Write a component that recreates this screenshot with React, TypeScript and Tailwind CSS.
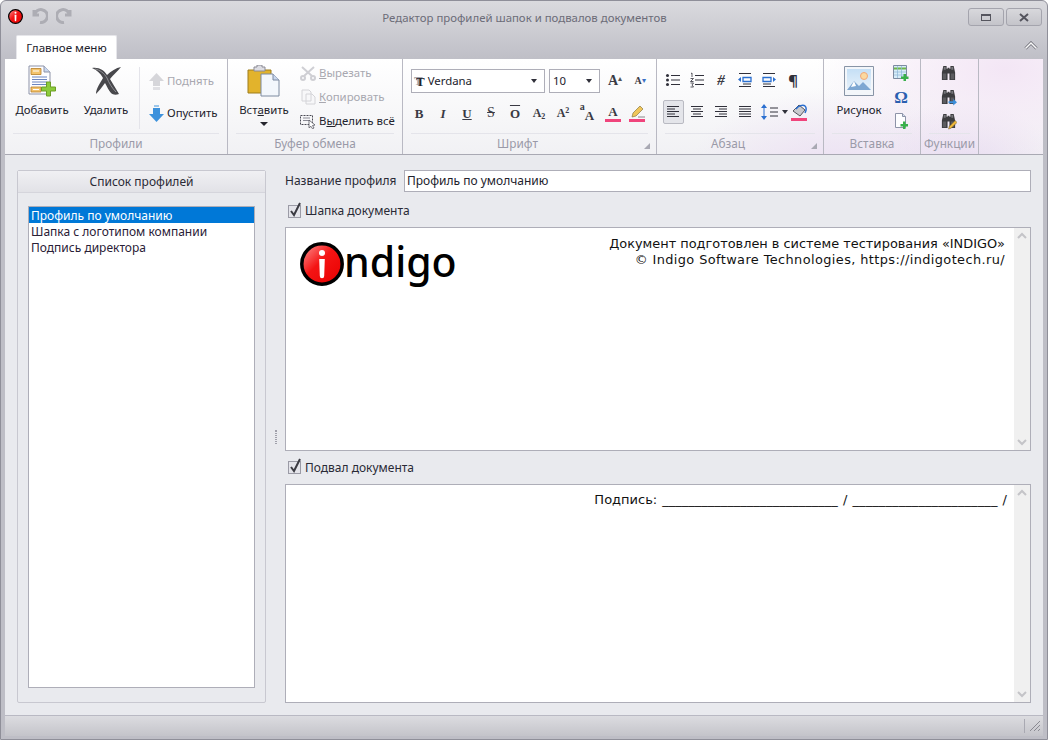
import React from "react";

const UI = "font-['Noto_Sans',sans-serif]";

function Grp({ w, label, launcher, children }: { w: string; label: string; launcher?: boolean; children: React.ReactNode }) {
  return (
    <div className={`${w} shrink-0 flex flex-col border-r border-[#b9b9c3]`}>
      <div className="h-[74px] flex">{children}</div>
      <div className={`relative mx-[8px] h-[21px] border-t border-[#e4e4ea] flex items-center justify-center text-[11.8px] leading-none text-[#9a9aa8] ${launcher ? "pr-[24px]" : ""}`}>
        {label}
        {launcher && <span className="absolute right-[-2px] bottom-[5px] w-0 h-0 border-l-[6px] border-l-transparent border-b-[6px] border-b-[#a9a9b3]" />}
      </div>
    </div>
  );
}

function Big({ w, icon, children, caret }: { w: string; icon: React.ReactNode; children: React.ReactNode; caret?: boolean }) {
  return (
    <div className={`${w} shrink-0 flex flex-col items-center pt-[6px]`}>
      <div className="h-[32px] flex items-center justify-center">{icon}</div>
      <div className="mt-[5px] text-[11.4px] leading-[16px] text-[#22222c]">{children}</div>
      {caret && <span className="mt-[4px] w-0 h-0 border-x-[4px] border-x-transparent border-t-[4px] border-t-[#26262e]" />}
    </div>
  );
}

function Small({ icon, text, off, h }: { icon: React.ReactNode; text: React.ReactNode; off?: boolean; h: string }) {
  return (
    <div className={`${h} flex items-center gap-[3px] text-[11.4px] leading-none ${off ? "text-[#a8a8b0]" : "text-[#22222c]"}`}>
      <span className="w-[16px] h-[16px] flex items-center justify-center">{icon}</span>
      <span>{text}</span>
    </div>
  );
}

function Tool({ children, active }: { children: React.ReactNode; active?: boolean }) {
  return (
    <div className="w-[24px] h-[24px] flex items-center justify-center">
      <div className={`w-[21px] h-[24px] flex items-center justify-center ${active ? "border border-[#b9bac2] rounded-[2px] bg-[#e4e5ea]" : ""}`}>
        {children}
      </div>
    </div>
  );
}

function Lines({ rows }: { rows: [number, number][] }) {
  return (
    <svg width="16" height="16" viewBox="0 0 16 16" fill="none" stroke="#30303a" strokeWidth="1">
      {rows.map(([a, b], i) => (
        <path key={i} d={`M${a} ${2.5 + i * 2.5}H${b}`} />
      ))}
    </svg>
  );
}

function Glyph({ children, cls }: { children: React.ReactNode; cls: string }) {
  return <span className={`font-['Liberation_Serif',serif] leading-none text-[#3a3a44] ${cls}`}>{children}</span>;
}

function Bar({ children, cls }: { children: React.ReactNode; cls?: string }) {
  return (
    <span className="relative flex flex-col items-center">
      <span className={cls}>{children}</span>
      <span className="mt-[1px] w-[16px] h-[3px] bg-[#f0447c]" />
    </span>
  );
}

function Binoculars({ badge }: { badge?: "arrow" | "pen" }) {
  return (
    <svg width="17" height="17" viewBox="0 0 18 18">
      <path d="M3.500 1h3.500v3h1v-1h2v1h1V1h3.500l1.500 7v8h-6V9H8v7H2V8z" fill="#3d3d40" />
      <path d="M3 9h3.500v6H3zM11.500 9H15v6h-3.500z" fill="#5b5b5f" />
      <path d="M4 2h2v3H4zM12 2h2v3h-2z" fill="#77777c" />
      {badge === "arrow" && <path d="M9 13h5v-2.500l4 3.500-4 3.500V15H9z" fill="#3c8fdc" />}
      {badge === "pen" && <path d="M9 17l1-3 6-6 2 2-6 6z" fill="#f0b93a" stroke="#5a4a20" strokeWidth=".5" />}
    </svg>
  );
}

function Check({ label }: { label: string }) {
  return (
    <div className="flex items-center h-[16px] pl-[3px] gap-[4px] text-[12px] leading-none text-[#2a2a36]">
      <span className="relative w-[13px] h-[13px] border border-[#9b9ba6] bg-[#e4e4ea]">
        <svg className="absolute left-[-1px] top-[-4px]" width="16" height="16" viewBox="0 0 16 16" fill="none">
          <path d="M3 9l3 4 6-12" stroke="#3b3b42" strokeWidth="2" />
        </svg>
      </span>
      {label}
    </div>
  );
}

function Editor({ h, children }: { h: string; children: React.ReactNode }) {
  return (
    <div className={`${h} flex border border-[#aeaeb8] bg-white`}>
      <div className="flex-1 min-w-0 relative">{children}</div>
      <div className="w-[16px] bg-[#f0f0f0] flex flex-col items-center justify-between py-[4px]">
        <svg width="10" height="8" viewBox="0 0 10 8" fill="none" stroke="#c4c4c8" strokeWidth="2"><path d="M1 6l4-4 4 4" /></svg>
        <svg width="10" height="8" viewBox="0 0 10 8" fill="none" stroke="#c4c4c8" strokeWidth="2"><path d="M1 2l4 4 4-4" /></svg>
      </div>
    </div>
  );
}

function InfoIcon({ size }: { size: number }) {
  return (
    <svg width={size} height={size} viewBox="0 0 44 44" className="shrink-0">
      <defs>
        <linearGradient id={`red${size}`} x1="0" y1="0" x2="1" y2="1">
          <stop offset="0" stopColor="#ff9a9a" />
          <stop offset=".45" stopColor="#f41414" />
          <stop offset="1" stopColor="#e80000" />
        </linearGradient>
      </defs>
      <circle cx="22" cy="22" r="20.200" fill={`url(#red${size})`} stroke="#000" strokeWidth="3.500" />
      <circle cx="22" cy="11" r="3" fill="#fff" />
      <path d="M19.200 17h5.600l-.6 17a2.200 2.200 0 0 1-4.400 0z" fill="#fff" />
    </svg>
  );
}

export default function App() {
  return (
    <div className={`${UI} w-[1048px] h-[740px] overflow-hidden flex flex-col rounded-t-[6px] border border-[#8f8f99] bg-[linear-gradient(#dadade,#bebec6_60px)] px-[4px] pb-[3px]`}>
      {/* title bar */}
      <div className="h-[34px] shrink-0 flex items-start">
        <div className="flex items-center gap-[8px] pl-[3px] pt-[7px]">
          <InfoIcon size={15} />
          <svg width="17" height="16" viewBox="0 0 17 16" fill="none" stroke="#adadb4" strokeWidth="3"><path d="M3 2v5h5M3.500 7A6.500 6.500 0 1 1 9 14.500" /></svg>
          <svg width="17" height="16" viewBox="0 0 17 16" fill="none" stroke="#adadb4" strokeWidth="3"><path d="M14 2v5H9M13.500 7A6.500 6.500 0 1 0 8 14.500" /></svg>
        </div>
        <div className="flex-1 text-center pt-[9px] pl-[8px] text-[11.4px] leading-[16px] text-[#6c6c78]">Редактор профилей шапок и подвалов документов</div>
        <div className="flex gap-[2px] pt-[7px] pr-[1px]">
          <div className="w-[36px] h-[18px] rounded-[3px] border border-[#a4a4ad] bg-[linear-gradient(#d8d8dc,#c4c4ca)] flex items-center justify-center">
            <span className="w-[10px] h-[7px] border border-[#55555e] border-t-[2px]" />
          </div>
          <div className="w-[36px] h-[18px] rounded-[3px] border border-[#a4a4ad] bg-[linear-gradient(#d8d8dc,#c4c4ca)] flex items-center justify-center">
            <svg width="10" height="9" viewBox="0 0 10 9" stroke="#55555e" strokeWidth="2"><path d="M1 1l8 7M9 1L1 8" /></svg>
          </div>
        </div>
      </div>

      {/* tabs */}
      <div className="h-[24px] shrink-0 flex items-end justify-between pl-[11px] pr-[5px]">
        <div className="w-[101px] h-[24px] bg-white border-t border-x border-[#e6e6ea] rounded-t-[2px] flex items-center justify-center text-[11.6px] text-[#22222c]">Главное меню</div>
        <svg className="mb-[9px]" width="14" height="9" viewBox="0 0 14 9" fill="none">
          <path d="M1.500 7.500L7 2l5.500 5.500" stroke="#6b6b74" strokeWidth="3" />
          <path d="M1.500 7.500L7 2l5.500 5.500" stroke="#fafafa" strokeWidth="1.500" />
        </svg>
      </div>

      {/* ribbon */}
      <div className="h-[96px] shrink-0 flex border-b border-[#a9a9b3] bg-[radial-gradient(ellipse_150px_90px_at_830px_120px,#ecdff3,transparent),radial-gradient(ellipse_190px_110px_at_1000px_10px,#f3e6f5,transparent),radial-gradient(ellipse_90px_70px_at_960px_110px,#e6daf0,transparent),linear-gradient(#ffffff,#f1f1f4)]">
        <Grp w="w-[223px]" label="Профили">
          <Big w="w-[74px]" icon={
            <svg width="30" height="32" viewBox="0 0 30 32">
              <path d="M2 1h15l6 6v22H2z" fill="#fdfdff" stroke="#8d93a8" />
              <path d="M17 1v6h6" fill="#c9d7ee" stroke="#8d93a8" />
              <path d="M4 3.500h10v6H4zM4 22h10v5H4z" fill="#f3c36d" stroke="#b67f28" strokeWidth=".8" />
              <path d="M6 6h6M6 24.500h6" stroke="#fff" />
              <path d="M5 12h15M5 14.500h15M5 17h15M5 19.500h15" stroke="#6d86c0" />
              <path d="M19.500 17h4v5h5v4h-5v5h-4v-5h-5v-4h5z" fill="#8ccb3c" stroke="#6c9e25" />
            </svg>
          }>Добавить</Big>
          <Big w="w-[54px]" icon={
            <svg width="31" height="30" viewBox="0 0 31 30">
              <path d="M1 2c7-1 12 2 15 7 4-4 9-7 14-8-3 4-8 8-11 12 3 5 6 10 9 15-3 1-6 1-8-1-3-3-4-7-6-10-3 4-6 8-9 11 0-5 4-11 7-16C9 7 6 4 1 2z" fill="#48484c" />
              <path d="M4 3c5 1 9 4 12 9 2 5 5 10 9 14" stroke="#8f8f94" fill="none" />
            </svg>
          }>Удалить</Big>
          <div className="w-px h-[62px] mt-[8px] ml-[6px] mr-[8px] bg-[#e4e4ea]" />
          <div className="pt-[6px]">
            <Small h="h-[32px]" off text="Поднять" icon={
              <svg width="15" height="17" viewBox="0 0 15 17"><path d="M7.500 0L15 8h-4v5H4V8H0z" fill="#d6d6da" /><path d="M4 14h7v3H4z" fill="#e0e0e4" /></svg>
            } />
            <Small h="h-[32px]" text="Опустить" icon={
              <svg width="15" height="17" viewBox="0 0 15 17"><path d="M5 0h5v2H5z" fill="#9cc6ea" /><path d="M4 3h7v6h4l-7.500 8L0 9h4z" fill="#3e92dc" /></svg>
            } />
          </div>
        </Grp>

        <Grp w="w-[175px]" label="Буфер обмена">
          <Big w="w-[72px]" caret icon={
            <svg width="34" height="32" viewBox="0 0 34 32">
              <path d="M1 5h23v23H1z" fill="#e2b32c" stroke="#9d7c1c" />
              <path d="M7 2h3V0h5v2h3v4H7z" fill="#dcdce2" stroke="#8a8a94" />
              <path d="M14 9h12l6 6v16H14z" fill="#f3f7fc" stroke="#7d8aa0" />
              <path d="M26 9v6h6" fill="#c9d7ee" stroke="#7d8aa0" />
            </svg>
          }>Вст<u>а</u>вить</Big>
          <div className="pt-[2px]">
            <Small h="h-[24px]" off text={<><u>В</u>ырезать</>} icon={
              <svg width="16" height="15" viewBox="0 0 16 15" fill="none" stroke="#cfcfd4" strokeWidth="2"><path d="M2 1l10 9M14 1L4 10" /><circle cx="3" cy="12" r="2" /><circle cx="13" cy="12" r="2" /></svg>
            } />
            <Small h="h-[24px]" off text={<><u>К</u>опировать</>} icon={
              <svg width="15" height="16" viewBox="0 0 15 16" fill="#f7f7f9" stroke="#d4d4d8"><path d="M1 1h7l2 2v9H1zM5 5h6l3 3v7H5z" /></svg>
            } />
            <Small h="h-[24px]" text={<>В<u>ы</u>делить всё</>} icon={
              <svg width="16" height="15" viewBox="0 0 16 15" fill="none"><path d="M.5 1.500h12v9H.5z" stroke="#4a4a55" strokeDasharray="2 1" /><path d="M3 4h7M3 6.500h7" stroke="#8b8b95" /><path d="M9 6l6 5-2.500.5L14 14l-1.500.8-1.500-2.500-2 1.500z" fill="#fff" stroke="#555560" strokeWidth=".8" /></svg>
            } />
          </div>
        </Grp>

        <Grp w="w-[254px]" label="Шрифт" launcher>
          <div className="pl-[8px] pt-[10px]">
            <div className="flex items-center h-[24px]">
              <div className="w-[134px] h-[24px] bg-white border border-[#aeaeb8] flex items-center pl-[4px] pr-[7px] text-[11.4px] text-[#22222c]">
                <span className="font-['Liberation_Serif',serif] font-bold text-[13px] leading-none mr-[3px] [text-shadow:-2px_-1px_0_#a0a0a8]">T</span>
                <span className="flex-1">Verdana</span>
                <span className="w-0 h-0 border-x-[3.500px] border-x-transparent border-t-[4px] border-t-[#30303a]" />
              </div>
              <div className="w-[51px] h-[24px] ml-[4px] bg-white border border-[#aeaeb8] flex items-center pl-[3px] pr-[7px] text-[11.4px] text-[#22222c]">
                <span className="flex-1">10</span>
                <span className="w-0 h-0 border-x-[3.500px] border-x-transparent border-t-[4px] border-t-[#30303a]" />
              </div>
              <div className="ml-[2px] w-[26px] flex justify-center items-start"><Glyph cls="text-[14px] font-bold">A</Glyph><span className="text-[8px] leading-none text-[#555]">▴</span></div>
              <div className="w-[24px] flex justify-center items-start"><Glyph cls="text-[10px] font-bold">A</Glyph><span className="text-[8px] leading-none text-[#3a6fc4]">▾</span></div>
            </div>
            <div className="flex items-center h-[24px] mt-[8px] -ml-[4px]">
              <Tool><Glyph cls="text-[13px] font-bold">B</Glyph></Tool>
              <Tool><Glyph cls="text-[13px] font-bold italic">I</Glyph></Tool>
              <Tool><Glyph cls="text-[13px] font-bold underline">U</Glyph></Tool>
              <Tool><Glyph cls="text-[14px] line-through">S</Glyph></Tool>
              <Tool><Glyph cls="text-[13px] font-bold overline">O</Glyph></Tool>
              <Tool><Glyph cls="text-[12px] font-bold">A<sub className="text-[8px]">2</sub></Glyph></Tool>
              <Tool><Glyph cls="text-[12px] font-bold">A<sup className="text-[8px]">2</sup></Glyph></Tool>
              <Tool><Glyph cls="relative text-[13px] font-bold pl-[5px] pt-[4px]"><span className="absolute left-0 top-[-3px] text-[10px]">a</span>A</Glyph></Tool>
              <div className="w-[28px] flex justify-center"><Bar><Glyph cls="text-[13px] font-bold block">A</Glyph></Bar></div>
              <div className="w-[20px] flex justify-center">
                <Bar>
                  <svg className="block" width="16" height="13" viewBox="0 0 16 13"><path d="M3 12l1-4 7-7 3 3-7 7z" fill="#f0c65a" stroke="#8a7a40" strokeWidth=".7" /><path d="M9 12h7" stroke="#888" /></svg>
                </Bar>
              </div>
            </div>
          </div>
        </Grp>

        <Grp w="w-[167px]" label="Абзац" launcher>
          <div className="pl-[4px] pt-[9px]">
            <div className="flex items-center h-[24px]">
              <Tool>
                <svg width="16" height="16" viewBox="0 0 16 16"><path d="M6 3.500h9M6 8h9M6 12.500h9" stroke="#30303a" /><circle cx="2.500" cy="3.500" r="1.500" fill="#30303a" /><circle cx="2.500" cy="8" r="1.500" fill="#30303a" /><circle cx="2.500" cy="12.500" r="1.500" fill="#30303a" /></svg>
              </Tool>
              <Tool>
                <svg width="16" height="16" viewBox="0 0 16 16"><path d="M6 3.500h9M6 8h9M6 12.500h9" stroke="#30303a" /><path d="M2 1.500l1-.5v4M1.500 6.500h3l-3 3h3M1.500 11h3l-1.500 2 1.500 2h-3" fill="none" stroke="#30303a" strokeWidth=".8" /></svg>
              </Tool>
              <Tool><Glyph cls="text-[15px] italic font-bold">#</Glyph></Tool>
              <Tool>
                <svg width="16" height="16" viewBox="0 0 16 16" fill="none"><path d="M2 1.500h12M2 14.500h12" stroke="#30303a" /><path d="M6 5.500h8v4H6z" stroke="#2a6fd0" strokeWidth="1.300" /><path d="M4 5l-3 2.500L4 10z" fill="#2a6fd0" /><path d="M6 12h8" stroke="#30303a" /></svg>
              </Tool>
              <Tool>
                <svg width="16" height="16" viewBox="0 0 16 16" fill="none"><path d="M2 1.500h12M2 14.500h12" stroke="#30303a" /><path d="M2 5.500h8v4H2z" stroke="#2a6fd0" strokeWidth="1.300" /><path d="M12 5l3 2.500L12 10z" fill="#2a6fd0" /><path d="M2 12h8" stroke="#30303a" /></svg>
              </Tool>
              <Tool><span className="text-[15px] leading-none font-bold text-[#30303a]">¶</span></Tool>
            </div>
            <div className="flex items-center h-[24px] mt-[8px]">
              <Tool active><Lines rows={[[2, 14], [2, 10], [2, 14], [2, 10], [2, 14]]} /></Tool>
              <Tool><Lines rows={[[2, 14], [4, 12], [2, 14], [4, 12], [2, 14]]} /></Tool>
              <Tool><Lines rows={[[2, 14], [6, 14], [2, 14], [6, 14], [2, 14]]} /></Tool>
              <Tool><Lines rows={[[2, 14], [2, 14], [2, 14], [2, 14], [2, 14]]} /></Tool>
              <div className="w-[34px] flex items-center justify-center gap-[2px]">
                <svg width="20" height="18" viewBox="0 0 20 18" fill="none"><path d="M4 1L1 5h6zM4 17l-3-4h6z" fill="#2a6fd0" /><path d="M4 5v8" stroke="#2a6fd0" /><path d="M10 5h8M10 9h8M10 13h8" stroke="#30303a" /></svg>
                <span className="w-0 h-0 border-x-[3.500px] border-x-transparent border-t-[4px] border-t-[#30303a]" />
              </div>
              <div className="w-[16px] flex justify-center">
                <Bar>
                  <svg className="block" width="16" height="13" viewBox="0 0 16 13"><path d="M2 7l6-6 6 5-5 6z" fill="#c9c9ce" stroke="#55555e" /><path d="M5 5c2-3 7-5 9-3s1 5 0 7" fill="none" stroke="#2a6fd0" strokeWidth="1.500" /></svg>
                </Bar>
              </div>
            </div>
          </div>
        </Grp>

        <Grp w="w-[97px]" label="Вставка">
          <Big w="w-[70px]" icon={
            <svg width="30" height="30" viewBox="0 0 30 30">
              <defs><linearGradient id="sky" x1="0" y1="0" x2="0" y2="1"><stop offset="0" stopColor="#c5dff5" /><stop offset="1" stopColor="#e8f2fb" /></linearGradient></defs>
              <path d="M.5.500h29v29H.5z" fill="#f3f6fa" stroke="#8894a6" />
              <path d="M3 3h24v21H3z" fill="url(#sky)" />
              <circle cx="20" cy="10" r="3.500" fill="#fbd9a0" stroke="#f0a878" />
              <path d="M3 24l7-9 5 5 4-4 8 8z" fill="#7ea7d2" />
              <path d="M10 15l2 5-5 1z" fill="#fff" />
            </svg>
          }>Рисунок</Big>
          <div className="flex flex-col items-center w-[16px] pt-[2px] -ml-[1px]">
            <div className="h-[24px] flex items-center">
              <svg width="16" height="16" viewBox="0 0 16 16"><path d="M.5.500h13v13H.5z" fill="#d8ecf8" stroke="#7d8aa0" /><path d="M1 3.500h12" stroke="#6fb64a" strokeWidth="2" /><path d="M4.500 1v12M8.500 1v12M1 7h12M1 10h12" stroke="#8fb8d8" strokeWidth=".7" /><path d="M10.500 9h2.500v2.500h2.500V14H13v2h-2.500v-2H8v-2.500h2.500z" fill="#38b04a" /></svg>
            </div>
            <div className="h-[24px] flex items-center text-[17px] font-bold leading-none text-[#2a5fb0] font-['Liberation_Serif',serif]">Ω</div>
            <div className="h-[24px] flex items-center">
              <svg width="16" height="16" viewBox="0 0 16 16"><path d="M2.500.500h7l3 3v11h-10z" fill="#fdfdff" stroke="#8d93a8" /><path d="M9.500.500v3h3" fill="#d5dfef" stroke="#8d93a8" /><path d="M10 8.500h2.500V11H15v2.500h-2.500V16H10v-2.500H7.500V11H10z" fill="#38b04a" /></svg>
            </div>
          </div>
        </Grp>

        <Grp w="w-[58px]" label="Функции">
          <div className="w-full flex flex-col items-center pt-[2px] pr-[3px]">
            <div className="h-[24px] flex items-center"><Binoculars /></div>
            <div className="h-[24px] flex items-center"><Binoculars badge="arrow" /></div>
            <div className="h-[24px] flex items-center"><Binoculars badge="pen" /></div>
          </div>
        </Grp>
      </div>

      {/* content */}
      <div className="flex-1 min-h-0 flex bg-[#e9eaee] pl-[12px] pr-[12px] pt-[15px] pb-[12px] text-[12px]">
        <div className="w-[249px] shrink-0 flex flex-col rounded-[2px] border border-[#c8c8d0]">
          <div className="h-[22px] flex items-center justify-center border-b border-[#d5d5dc] bg-[linear-gradient(#f0f0f3,#e2e2e7)] text-[12px] leading-none text-[#2a2a36]">Список профилей</div>
          <div className="flex-1 min-h-0 px-[10px] pt-[13px] pb-[14px]">
            <div className="h-full border border-[#aeaeb8] bg-white text-[12px] leading-[15px] text-[#2a2036]">
              <div className="h-[16px] pt-px pl-[2px] bg-[#0078d7] text-white">Профиль по умолчанию</div>
              <div className="h-[16px] pt-px pl-[2px]">Шапка с логотипом компании</div>
              <div className="h-[16px] pt-px pl-[2px]">Подпись директора</div>
            </div>
          </div>
        </div>

        <div className="w-[19px] shrink-0 flex items-center justify-center">
          <span className="w-[2px] h-[14px] border-x border-dotted border-[#a0a0aa]" />
        </div>

        <div className="flex-1 min-w-0 flex flex-col">
          <div className="flex items-center h-[22px]">
            <span className="w-[119px] text-[#2a2a36]">Название профиля</span>
            <div className="flex-1 h-[22px] border border-[#aeaeb8] bg-white flex items-center pl-[2px] text-[#22222c]">Профиль по умолчанию</div>
          </div>
          <div className="mt-[11px] mb-[8px]"><Check label="Шапка документа" /></div>
          <Editor h="h-[224px]">
            <div className="absolute left-[14px] top-[14px] flex items-center">
              <InfoIcon size={44} />
              <span className="text-[41px] font-medium leading-none text-black -mt-[6px]">ndigo</span>
            </div>
            <div className="pt-[8px] pr-[9px] text-right font-['DejaVu_Sans',sans-serif] text-[12.9px] leading-[16px] text-[#111]">
              <div>Документ подготовлен в системе тестирования «INDIGO»</div>
              <div className="tracking-[0.4px]">© Indigo Software Technologies, https://indigotech.ru/</div>
            </div>
          </Editor>
          <div className="mt-[9px] mb-[8px]"><Check label="Подвал документа" /></div>
          <Editor h="h-[220px]">
            <div className="pt-[7px] pr-[7px] text-right font-['DejaVu_Sans',sans-serif] text-[13px] leading-[16px] text-[#111] [word-spacing:1px]">
              Подпись: ___________________________ / <span className="tracking-[0.09px]">______________________</span> /
            </div>
          </Editor>
        </div>
      </div>

      {/* status bar */}
      <div className="h-[21px] shrink-0 flex justify-end items-center border-t border-[#b9b9c3] bg-[linear-gradient(#dcdce0,#c4c4ca)]">
        <span className="w-px h-[14px] bg-[#a9a9b2] mr-[4px]" />
        <svg className="mr-[2px]" width="12" height="12" viewBox="0 0 12 12" stroke="#8a8a92"><path d="M1 11L11 1M5 11l6-6M9 11l2-2" /></svg>
      </div>
    </div>
  );
}
